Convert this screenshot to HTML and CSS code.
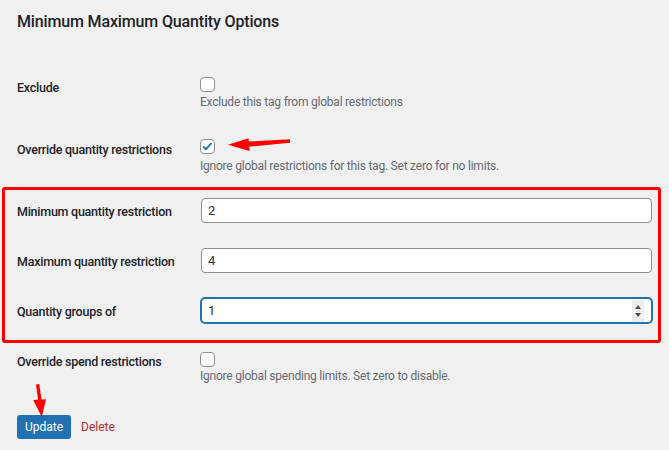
FILE: index.html
```html
<!DOCTYPE html>
<html lang="en">
<head>
<meta charset="utf-8">
<title>Minimum Maximum Quantity Options</title>
<link rel="stylesheet" href="styles.css">
</head>
<body>
<div class="page">
  <h2 class="title">Minimum Maximum Quantity Options</h2>

  <div class="row row-first">
    <div class="label">Exclude</div>
    <div class="field">
      <span class="checkbox"></span>
      <p class="desc">Exclude this tag from global restrictions</p>
    </div>
  </div>

  <div class="row row-second">
    <div class="label">Override quantity restrictions</div>
    <div class="field">
      <span class="checkbox checked"><svg viewBox="0 0 15 15" width="15" height="15"><path d="M3.6 7.9 L6 10.2 L11 4.6" fill="none" stroke="#2271b1" stroke-width="1.9" stroke-linecap="round" stroke-linejoin="round"/></svg></span>
      <p class="desc desc-low">Ignore global restrictions for this tag. Set zero for no limits.</p>
    </div>
  </div>

  <div class="highlight">
    <div class="row row-input">
      <div class="label label-input">Minimum quantity restriction</div>
      <div class="field"><div class="input"><span class="value">2</span></div></div>
    </div>
    <div class="row row-input">
      <div class="label label-input">Maximum quantity restriction</div>
      <div class="field"><div class="input"><span class="value">4</span></div></div>
    </div>
    <div class="row row-input">
      <div class="label label-input">Quantity groups of</div>
      <div class="field">
        <div class="input focused">
          <span class="value">1</span>
          <span class="spinner"><span class="tri up"></span><span class="tri down"></span></span>
        </div>
      </div>
    </div>
  </div>

  <div class="row row-spend">
    <div class="label label-high">Override spend restrictions</div>
    <div class="field">
      <span class="checkbox"></span>
      <p class="desc desc-tight">Ignore global spending limits. Set zero to disable.</p>
    </div>
  </div>

  <div class="actions">
    <span class="button">Update</span>
    <a class="delete" href="#">Delete</a>
  </div>

  <svg class="annot" width="669" height="450" viewBox="0 0 669 450">
    <polygon fill="#ff0000" points="290,139.3 290,142.8 248,146.8 248,141.6"/>
    <polygon fill="#ff0000" points="228,144.8 248.5,138.2 249.5,151"/>
    <polygon fill="#ff0000" points="36,384.5 39.2,384 41.7,401 38.3,401.5"/>
    <polygon fill="#ff0000" points="33.2,400 46,399.2 41.8,417"/>
  </svg>
</div>
</body>
</html>
```
FILE: styles.css
```css
html, body {
  margin: 0;
  padding: 0;
}
body {
  background: #f0f0f1;
  color: #1d2327;
  font-family: Roboto, "Liberation Sans", Arial, sans-serif;
  font-size: 13px;
  width: 669px;
  height: 450px;
  overflow: hidden;
}
.page {
  position: relative;
  padding: 11px 17px 0 17px;
  height: 450px;
  box-sizing: border-box;
}
.title {
  margin: 0;
  font-size: 16px;
  line-height: 22px;
  font-weight: 500;
  letter-spacing: -0.15px;
  color: #1d2327;
}
.row {
  display: grid;
  grid-template-columns: 183px 1fr;
  align-items: start;
}
.row-first { margin-top: 44px; }
.row-second { margin-top: 28px; }
.label {
  font-size: 12.5px;
  line-height: 18px;
  font-weight: 500;
  letter-spacing: -0.25px;
  padding-top: 2px;
  color: #1d2327;
}
.label-high { padding-top: 1px; }
.label-input { padding-top: 5px; }
.field {
  display: flex;
  flex-direction: column;
  align-items: flex-start;
}
.checkbox {
  display: block;
  width: 13px;
  height: 13px;
  border: 1px solid #8c8f94;
  border-radius: 4px;
  background: #fff;
  position: relative;
}
.checkbox svg {
  display: block;
  margin: -1px 0 0 -1px;
}
.desc {
  margin: 2px 0 0 0;
  font-size: 12px;
  line-height: 17px;
  letter-spacing: -0.22px;
  color: #646970;
}
.desc-low { margin-top: 4px; }
.desc-tight { margin-top: 1px; }

.highlight {
  margin: 12px -9px 0 -15px;
  border: 3px solid #ff0000;
  border-radius: 3px;
  padding: 8px 6px 17px 12px;
  display: flex;
  flex-direction: column;
  gap: 25px;
}
.row-input .field { display: block; }
.input {
  box-sizing: border-box;
  height: 25px;
  border: 1px solid #8c8f94;
  border-radius: 4px;
  background: #fff;
  display: flex;
  align-items: center;
  padding: 0 6px;
  font-size: 13px;
  color: #2c3338;
  margin-left: 1px;
}
.input.focused {
  border-color: #2271b1;
  box-shadow: 0 0 0 1px #2271b1;
  justify-content: space-between;
  padding-right: 7px;
}
.value { line-height: 18px; }
.spinner {
  width: 12px;
  height: 22px;
  background: #efefef;
  display: flex;
  flex-direction: column;
  align-items: center;
  justify-content: center;
  gap: 4px;
}
.tri {
  width: 0;
  height: 0;
  border-left: 3.5px solid transparent;
  border-right: 3.5px solid transparent;
}
.tri.up { border-bottom: 4px solid #505050; }
.tri.down { border-top: 4px solid #505050; }

.row-spend { margin-top: 9px; }

.actions {
  margin-top: 30px;
  display: flex;
  align-items: center;
}
.button {
  display: inline-flex;
  align-items: center;
  justify-content: center;
  box-sizing: border-box;
  width: 54px;
  height: 24px;
  background: #2271b1;
  border-radius: 3px;
  color: #fff;
  font-size: 12px;
}
.delete {
  margin-left: 10px;
  color: #b32d2e;
  font-size: 12px;
  text-decoration: none;
}
.annot {
  position: absolute;
  left: 0;
  top: 0;
  pointer-events: none;
}
```
